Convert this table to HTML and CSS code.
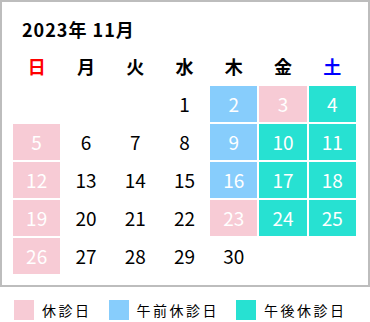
FILE: index.html
```html
<!DOCTYPE html>
<html lang="ja">
<head>
<meta charset="utf-8">
<link rel="stylesheet" href="styles.css">
</head>
<body>
<div class="calendar">
  <div class="title">2023年 11月</div>
  <div class="grid">
    <div class="wd sun">日</div>
    <div class="wd">月</div>
    <div class="wd">火</div>
    <div class="wd">水</div>
    <div class="wd">木</div>
    <div class="wd">金</div>
    <div class="wd sat">土</div>

    <div class="day"></div>
    <div class="day"></div>
    <div class="day"></div>
    <div class="day">1</div>
    <div class="day am">2</div>
    <div class="day off">3</div>
    <div class="day pm">4</div>

    <div class="day off">5</div>
    <div class="day">6</div>
    <div class="day">7</div>
    <div class="day">8</div>
    <div class="day am">9</div>
    <div class="day pm">10</div>
    <div class="day pm">11</div>

    <div class="day off">12</div>
    <div class="day">13</div>
    <div class="day">14</div>
    <div class="day">15</div>
    <div class="day am">16</div>
    <div class="day pm">17</div>
    <div class="day pm">18</div>

    <div class="day off">19</div>
    <div class="day">20</div>
    <div class="day">21</div>
    <div class="day">22</div>
    <div class="day off">23</div>
    <div class="day pm">24</div>
    <div class="day pm">25</div>

    <div class="day off">26</div>
    <div class="day">27</div>
    <div class="day">28</div>
    <div class="day">29</div>
    <div class="day">30</div>
    <div class="day"></div>
    <div class="day"></div>
  </div>
</div>
<div class="legend">
  <div class="item"><span class="swatch off"></span><span class="label">休診日</span></div>
  <div class="item"><span class="swatch am"></span><span class="label">午前休診日</span></div>
  <div class="item"><span class="swatch pm"></span><span class="label">午後休診日</span></div>
</div>
</body>
</html>
```

FILE: styles.css
```css
html, body {
  margin: 0;
  padding: 0;
  background: #ffffff;
}

body {
  font-family: "Noto Sans CJK JP", "Noto Sans", sans-serif;
  color: #000000;
}

.calendar {
  box-sizing: border-box;
  width: 370px;
  border: 2px solid #bdbdbd;
  padding: 10px 12px 11px 11px;
}

.title {
  font-size: 18px;
  font-weight: 700;
  line-height: 34px;
  height: 34px;
  padding-left: 9px;
  letter-spacing: 1px;
  margin-bottom: 2px;
}

.grid {
  display: grid;
  grid-template-columns: repeat(7, 1fr);
  grid-auto-rows: 36px;
  column-gap: 2px;
  row-gap: 2px;
}

.wd {
  font-size: 18px;
  font-weight: 700;
  text-align: center;
  line-height: 36px;
}

.wd.sun { color: #ff0000; }
.wd.sat { color: #0000ff; }

.day {
  font-size: 19px;
  text-align: center;
  line-height: 36px;
}

.day.off, .day.am, .day.pm { color: #ffffff; }

.off { background: #f7cbd5; }
.am { background: #87cdfc; }
.pm { background: #27e1d2; }

.legend {
  display: flex;
  align-items: center;
  gap: 17px;
  margin-top: 13px;
  padding-left: 14px;
}

.item {
  display: flex;
  align-items: center;
  gap: 8px;
}

.swatch {
  display: block;
  width: 20px;
  height: 20px;
}

.label {
  font-size: 14px;
  letter-spacing: 2.5px;
  line-height: 20px;
}
```
